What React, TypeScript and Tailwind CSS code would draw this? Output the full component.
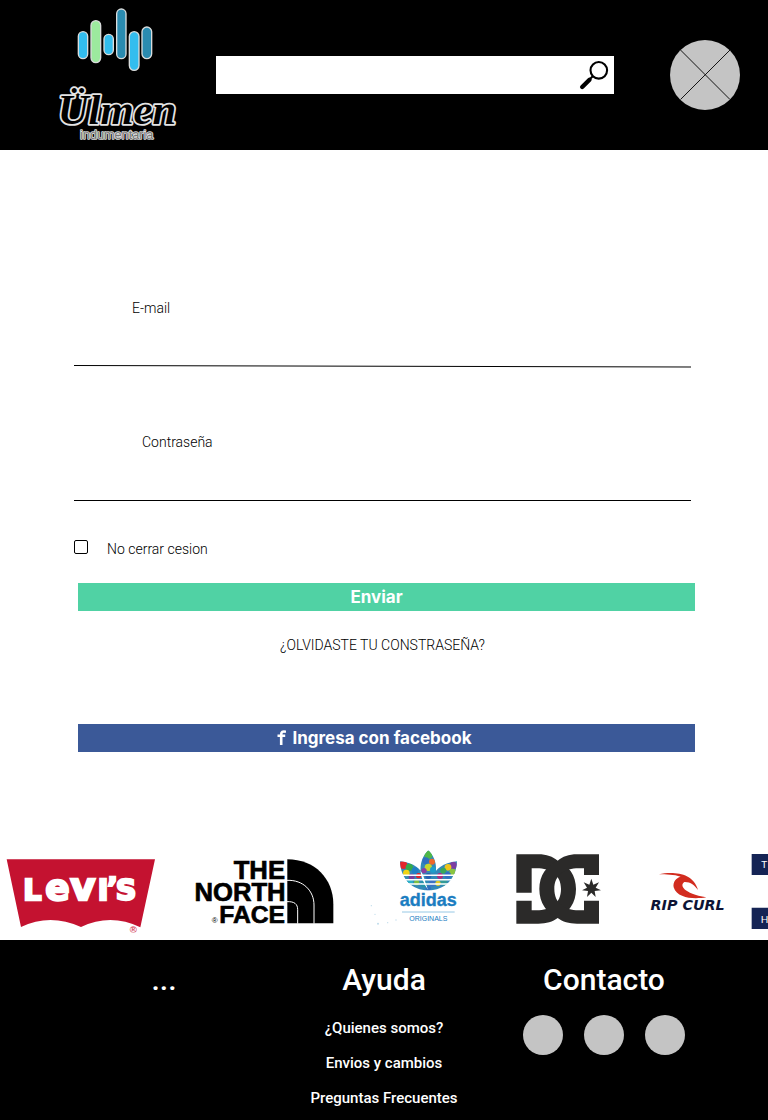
import React from "react";

function UlmenLogo() {
  return (
    <svg className="h-[150px] w-[140px] shrink-0" viewBox="0 0 420 450" role="img" aria-label="Ülmen indumentaria">
      <g stroke="#d9dcdc" strokeWidth="4">
        <rect x="106" y="95" width="28" height="81" rx="14" fill="#33bdee" />
        <rect x="144" y="62" width="29" height="126" rx="14.5" fill="#9cea9e" />
        <rect x="183" y="103" width="28" height="61" rx="14" fill="#33bdee" />
        <rect x="221" y="27" width="28" height="149" rx="14" fill="#2a8bb0" />
        <rect x="259" y="95" width="29" height="116" rx="14.5" fill="#33bdee" />
        <rect x="297" y="81" width="29" height="95" rx="14.5" fill="#2a8bb0" />
      </g>
      <text
        x="222"
        y="371"
        textAnchor="middle"
        fontFamily="Liberation Serif, serif"
        fontStyle="italic"
        fontWeight="700"
        fontSize="128"
        fill="#000"
        stroke="#e4e4e4"
        strokeWidth="11"
        strokeLinejoin="round"
        paintOrder="stroke"
      >
        Ülmen
      </text>
      <text
        x="221"
        y="418"
        textAnchor="middle"
        fontFamily="Liberation Sans, sans-serif"
        fontSize="38"
        fill="#777"
        stroke="#dcdcdc"
        strokeWidth="5"
        strokeLinejoin="round"
        paintOrder="stroke"
      >
        indumentaria
      </text>
    </svg>
  );
}

function SearchIcon() {
  return (
    <svg className="h-[38px] w-[38px]" viewBox="0 0 38 38" fill="none" stroke="#000" aria-hidden="true">
      <circle cx="22.8" cy="14.3" r="8.3" strokeWidth="2.1" />
      <path d="M16.8 20.3 L14.2 22.8" strokeWidth="2" />
      <path d="M13.5 23.8 L6.2 31" strokeWidth="4.4" strokeLinecap="round" />
    </svg>
  );
}

function LevisLogo() {
  return (
    <svg className="h-[100px] w-[180px] shrink-0" viewBox="0 -15 540 300" role="img" aria-label="Levi's">
      <path d="M20 43 H465 L421 247 Q332 204 243 246 Q150 204 63 246 Z" fill="#c41230" />
      <g fill="#fff" stroke="#fff" strokeWidth="7" fontFamily="DejaVu Sans, sans-serif" fontWeight="700">
        <text y="164" fontSize="86">
          <tspan x="70">L</tspan>
          <tspan x="136" fontSize="108">e</tspan>
          <tspan x="211" fontSize="116">v</tspan>
          <tspan x="293">I</tspan>
          <tspan x="321" y="158">’</tspan>
          <tspan x="347" y="164">S</tspan>
        </text>
      </g>
      <text x="400" y="263" textAnchor="middle" fontFamily="Liberation Sans, sans-serif" fontWeight="700" fontSize="29" fill="#d4455c">®</text>
    </svg>
  );
}

function NorthFaceLogo() {
  return (
    <svg className="h-[100px] w-[170px] shrink-0" viewBox="0 -15 510 300" role="img" aria-label="The North Face">
      <g fontFamily="Liberation Sans, sans-serif" fontWeight="700" fontSize="77" textAnchor="end" stroke="#000" strokeWidth="2">
        <text x="315" y="101">THE</text>
        <text x="317" y="167">NORTH</text>
        <text x="315" y="234" fontSize="74">FACE</text>
      </g>
      <text x="104" y="234" textAnchor="middle" fontFamily="Liberation Sans, sans-serif" fontSize="24">®</text>
      <path d="M322 43 C405 43 460 102 460 178 V235 H322 Z" />
      <path d="M321 106 C370 104 402 138 402 180 V236 M321 170 C343 169 353 177 353 194 V236" fill="none" stroke="#fff" strokeWidth="3" />
    </svg>
  );
}

const paint: [number, number, number, string][] = [
  [130, 75, 12, "#e3242b"], [148, 82, 11, "#35a94a"], [165, 92, 10, "#1f7fc4"], [139, 99, 10, "#f1d414"],
  [155, 110, 9, "#7a3d9c"], [176, 107, 8, "#e3242b"], [150, 127, 9, "#2bb0c8"], [170, 128, 8, "#7cc043"],
  [205, 44, 12, "#4fb748"], [197, 62, 10, "#2f6fc0"], [216, 65, 9, "#f0672a"], [205, 82, 11, "#c7d62c"],
  [192, 92, 8, "#8d3fa0"], [219, 89, 9, "#1d9dcc"], [205, 108, 9, "#285fb2"], [191, 132, 10, "#2596a8"],
  [217, 130, 10, "#3e72c4"], [280, 76, 11, "#7b3fa2"], [264, 82, 10, "#efc51c"], [250, 92, 9, "#3aa857"],
  [278, 96, 10, "#8bc53f"], [263, 106, 10, "#356dc2"], [240, 108, 9, "#b02d80"], [251, 127, 10, "#329a96"],
  [234, 130, 8, "#e2ca24"], [205, 145, 8, "#2f6fc0"],
];

function AdidasLogo() {
  return (
    <svg className="h-[100px] w-[150px] shrink-0" viewBox="-30 0 450 300" role="img" aria-label="adidas originals">
      <defs>
        <clipPath id="trefoil">
          <path d="M205 31 C174 61 174 109 205 151 C236 109 236 61 205 31 Z M120 64 C163 69 184 88 190 108 L205 151 C160 152 122 120 120 64 Z M291 64 C248 69 226 88 220 108 L205 151 C250 152 289 120 291 64 Z" />
        </clipPath>
      </defs>
      <g clipPath="url(#trefoil)">
        <rect x="115" y="25" width="180" height="130" fill="#3389b8" />
        {paint.map(([x, y, r, color], i) => (
          <circle key={i} cx={x} cy={y} r={r} fill={color} />
        ))}
      </g>
      <path d="M118 106 H292 M125 119 H286 M138 132 H272" stroke="#fff" strokeWidth="4.5" />
      <text x="205" y="198" textAnchor="middle" fontFamily="Liberation Sans, sans-serif" fontWeight="700" fontSize="54" fill="#1b7dc1" stroke="#1b7dc1" strokeWidth="1">adidas</text>
      <path d="M126 216 H284" stroke="#62acd8" strokeWidth="2" />
      <text x="205" y="242" textAnchor="middle" fontFamily="Liberation Sans, sans-serif" fontSize="21" fill="#1b7dc1">ORIGINALS</text>
      <g fill="#bfdceb">
        <circle cx="34" cy="197" r="2" />
        <circle cx="45" cy="223" r="2" />
        <circle cx="54" cy="251" r="3" />
        <circle cx="83" cy="248" r="2" />
        <circle cx="108" cy="240" r="2" />
      </g>
    </svg>
  );
}

function DcLogo() {
  return (
    <svg className="h-[100px] w-[120px] shrink-0" viewBox="0 0 360 300" fill="#2b2a29" role="img" aria-label="DC">
      <path d="M49 43 H115 C140 43 158 50 173 62 C206 76 228 106 228 147 C228 188 206 220 173 234 C158 245 140 251 115 251 H49 V182 H95 V211 H110 C152 211 183 190 183 147 C183 105 152 85 110 85 H95 V158 H49 Z" />
      <path d="M297 43 H231 C206 43 188 50 173 62 C140 76 118 106 118 147 C118 188 140 220 173 234 C188 245 206 251 231 251 H297 V182 H252 V211 H236 C194 211 163 190 163 147 C163 105 194 85 236 85 H252 V105 H297 Z" />
      <path d="M274 116 L280 134 L297 127 L287 143 L303 151 L284 153 L287 171 L274 158 L261 171 L264 153 L246 151 L261 143 L251 127 L268 134 Z" />
    </svg>
  );
}

function RipCurlLogo() {
  return (
    <svg className="h-[100px] w-[120px] shrink-0" viewBox="-30 0 360 300" role="img" aria-label="Rip Curl">
      <path
        d="M87 103 C125 95 190 96 204 150 C195 136 180 125 163 126 C148 136 160 160 229 172 C195 178 142 177 131 142 C128 126 138 114 152 110 C132 104 108 103 87 103 Z"
        fill="#d22c1f"
      />
      <text x="173" y="210" textAnchor="middle" fontFamily="DejaVu Sans, sans-serif" fontWeight="700" fontStyle="italic" fontSize="43" fill="#0d1435">
        RIP CURL
      </text>
    </svg>
  );
}

function FlagLogo() {
  return (
    <svg className="h-[100px] w-[28px] shrink-0" viewBox="330 0 84 300" aria-hidden="true">
      <path d="M365 42 H414 V105 H365 Z M365 203 H414 V267 H365 Z" fill="#152455" />
      <g fill="#fff" fontFamily="Lato, sans-serif" fontSize="30">
        <text x="394" y="84">T</text>
        <text x="392" y="248">H</text>
      </g>
    </svg>
  );
}

const helpLinks = ["¿Quienes somos?", "Envios y cambios", "Preguntas Frecuentes"];
const socialNetworks = ["Facebook", "Instagram", "Twitter"];

export default function App() {
  return (
    <div className="bg-white font-['Roboto',sans-serif] text-black">
      <header className="flex h-[150px] items-center bg-black pr-7 pl-[43px]">
        <UlmenLogo />
        <form className="ml-[33px] flex h-[38px] flex-1 bg-white" role="search" onSubmit={(e) => e.preventDefault()}>
          <input type="search" aria-label="Buscar" className="min-w-0 flex-1 bg-white px-3 text-sm outline-none" />
          <button type="submit" aria-label="Buscar">
            <SearchIcon />
          </button>
        </form>
        <button type="button" aria-label="Mi cuenta" className="ml-14 shrink-0">
          <svg className="size-[70px]" viewBox="0 0 70 70" aria-hidden="true">
            <circle cx="35" cy="35" r="35" fill="#c4c4c4" />
            <path d="M10.5 10 L60 59.5 M60 10 L10.5 59.5" stroke="#000" strokeWidth="0.9" />
          </svg>
        </button>
      </header>

      <main>
        <form className="flex flex-col pt-[148px] pr-[73px] pl-[74px] text-sm font-light" onSubmit={(e) => e.preventDefault()}>
          <div className="mr-1 flex flex-col">
            <label htmlFor="email" className="pl-[58px] leading-5">E-mail</label>
            <input id="email" type="email" className="h-[47px] px-2 outline-none" />
            <svg className="h-[3px] w-full" viewBox="0 0 618 3" preserveAspectRatio="none" aria-hidden="true">
              <path d="M0 0.5 L618 2" stroke="#000" />
            </svg>
          </div>
          <div className="mt-16 mr-1 flex flex-col">
            <label htmlFor="password" className="pl-[68px] leading-5">Contraseña</label>
            <input id="password" type="password" className="h-[49px] border-b border-black px-2 outline-none" />
          </div>
          <div className="mt-[38px] flex items-start">
            <input id="remember" type="checkbox" className="mt-px size-[14px] appearance-none rounded-[2px] border border-black checked:bg-black" />
            <label htmlFor="remember" className="ml-[19px] leading-5">No cerrar cesion</label>
          </div>
          <button type="submit" className="mt-6 ml-1 h-7 bg-[#50d2a4] pr-5 font-['Inter',sans-serif] text-[17px] font-bold text-white">
            Enviar
          </button>
          <a href="#recuperar" className="mt-6 mr-1 self-center leading-5">¿OLVIDASTE TU CONSTRASEÑA?</a>
          <button type="button" className="mt-[69px] ml-1 flex h-7 items-center justify-center gap-[6px] bg-[#3b5998] pr-6 font-['Inter',sans-serif] text-[17px] font-bold text-white">
            <svg className="h-[17px] w-[9px]" viewBox="0 0 9 17" fill="none" stroke="currentColor" strokeWidth="2.6" aria-hidden="true">
              <path d="M9 1.8 C5.5 0.9 4.2 2 4.2 4.5 V15 M0.5 5.8 H8.2" />
            </svg>
            Ingresa con facebook
          </button>
        </form>

        <section aria-label="Marcas" className="mt-[88px] flex overflow-hidden">
          <LevisLogo />
          <NorthFaceLogo />
          <AdidasLogo />
          <DcLogo />
          <RipCurlLogo />
          <FlagLogo />
        </section>
      </main>

      <footer className="grid grid-cols-3 bg-black px-[54px] pt-5 pb-1 text-center font-medium text-white">
        <section>
          <h2 className="text-[30px] leading-10">...</h2>
        </section>
        <section>
          <h2 className="text-[30px] leading-10">Ayuda</h2>
          <ul className="mt-[11px] text-[15px] leading-[35px]">
            {helpLinks.map((label) => (
              <li key={label}>
                <a href="#ayuda" className="whitespace-nowrap">{label}</a>
              </li>
            ))}
          </ul>
        </section>
        <section>
          <h2 className="text-[30px] leading-10">Contacto</h2>
          <div className="mt-[15px] flex justify-center gap-[21px]">
            {socialNetworks.map((name) => (
              <a key={name} href="#contacto" aria-label={name} className="size-10 rounded-full bg-[#c4c4c4]" />
            ))}
          </div>
        </section>
      </footer>
    </div>
  );
}
